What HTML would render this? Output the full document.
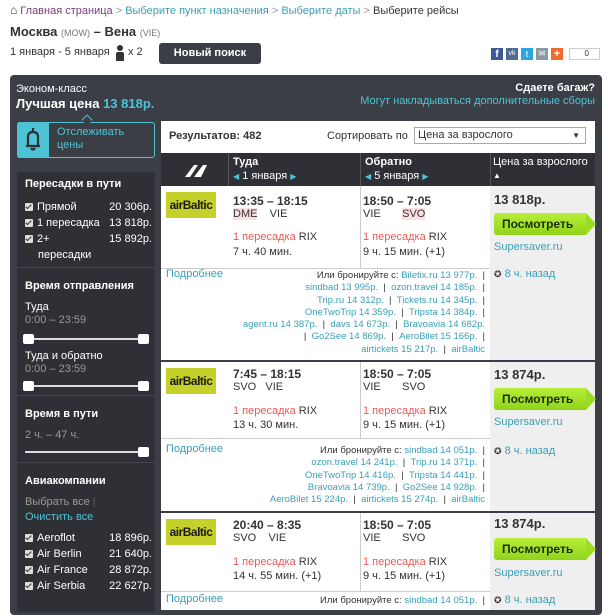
<!DOCTYPE html>
<html><head><meta charset="utf-8"><style>
*{margin:0;padding:0;box-sizing:border-box}
body{width:609px;height:600px;overflow:hidden;background:#fff;font-family:"Liberation Sans",Arial,sans-serif;font-size:11px;color:#333;position:relative}
.a{position:absolute;white-space:nowrap}
.lk{color:#3aa0b8}
.cy{color:#4fc3d6}
.panel{position:absolute;left:10px;top:75px;width:592px;height:540px;background:#3b3e45;border-radius:4px}
.side{position:absolute;left:17px;top:172px;width:138px;height:440px;background:#2e3036}
.sec{position:absolute;left:0;width:138px;border-top:1px solid #44474e}
.w{color:#fff}
.g{color:#999}
.h{font-weight:bold;color:#fff;font-size:11px}
.cb{display:inline-block;width:8px;height:8px;background:#ddd;border-radius:1px;margin-right:4px;vertical-align:-1px;position:relative}
.cb:after{content:"";position:absolute;left:2px;top:0px;width:2px;height:5px;border:solid #333;border-width:0 1.5px 1.5px 0;transform:rotate(45deg)}
.sl{position:absolute;left:8px;width:122px;height:2px;background:#ddd}
.kn{position:absolute;top:-4px;width:11px;height:10px;background:#fff;border-radius:2px}
.main{position:absolute;left:161px;top:121px;width:434px;height:490px;background:#fff}
.th{position:absolute;left:161px;top:153px;width:434px;height:33px;background:#2e3036}
.row{position:absolute;left:161px;width:434px;background:#fff;border-bottom:3px solid #3b3e45}
.pc{position:absolute;left:329px;top:0;width:105px;height:100%;background:#efefef}
.logo{position:absolute;left:5px;top:6px;width:50px;height:26px;background:#c5d12a;color:#1a1a1a;font-size:12px;font-weight:bold;text-align:center;line-height:26px;letter-spacing:-0.5px}
.t{font-size:12px;font-weight:bold;color:#333}
.red{color:#e85a5a}
.hl{background:#fbe0e0}
.btn{position:absolute;left:3px;width:92px;height:22px;background:linear-gradient(#b8ee3a,#8fd41a);border-radius:3px 0 0 3px;color:#1a3000;font-weight:bold;font-size:12px;line-height:22px;padding-left:8px}
.btn:after{content:"";position:absolute;right:-10px;top:0;border-left:10px solid #9ddc22;border-top:11px solid transparent;border-bottom:11px solid transparent}
.alt{position:absolute;right:110px;text-align:right;font-size:9.5px;line-height:12.3px;color:#333}
.alt span{color:#3aa0b8}
.vl{position:absolute;top:0;width:1px;background:#ccc}
</style></head><body>
<div class="a" style="left:10px;top:3px;font-size:11px"><span style="color:#333;font-size:12px">&#8962;</span><span style="color:#7a3a80"> Главная страница</span> <span class="g">&gt;</span> <span class="lk">Выберите пункт назначения</span> <span class="g">&gt;</span> <span class="lk">Выберите даты</span> <span class="g">&gt;</span> Выберите рейсы</div>
<div class="a" style="left:10px;top:24px;font-size:13px;font-weight:bold;color:#333">Москва <span style="font-weight:normal;font-size:9px;color:#777">(MOW)</span> – Вена <span style="font-weight:normal;font-size:9px;color:#777">(VIE)</span></div>
<div class="a" style="left:10px;top:46px;font-size:11px">1 января - 5 января</div>
<div class="a" style="left:116px;top:45px;width:8px;height:16px"><div style="width:6px;height:6px;background:#333;border-radius:50%;margin-left:1px"></div><div style="width:8px;height:9px;background:#333;margin-top:1px;border-radius:2px 2px 0 0"></div></div>
<div class="a" style="left:128px;top:46px">x 2</div>
<div class="a" style="left:159px;top:43px;width:102px;height:21px;background:#3b3e45;border-radius:3px;color:#fff;font-weight:bold;font-size:11px;text-align:center;line-height:21px">Новый поиск</div>
<div class="a" style="left:491px;top:48px;width:12px;height:12px;background:#3b5998;color:#fff;font-weight:bold;font-size:10px;text-align:center;line-height:13px">f</div>
<div class="a" style="left:506px;top:48px;width:12px;height:12px;background:#4c6c91;color:#fff;font-size:7px;text-align:center;line-height:12px">vk</div>
<div class="a" style="left:521px;top:48px;width:12px;height:12px;background:#2ea7e0;color:#fff;font-size:9px;text-align:center;line-height:12px">t</div>
<div class="a" style="left:536px;top:48px;width:12px;height:12px;background:#8a9aa0;color:#fff;font-size:8px;text-align:center;line-height:12px">✉</div>
<div class="a" style="left:551px;top:48px;width:12px;height:12px;background:#f26a2e;color:#fff;font-weight:bold;font-size:11px;text-align:center;line-height:12px">+</div>
<div class="a" style="left:569px;top:48px;width:31px;height:12px;border:1px solid #ccc;font-size:8px;text-align:right;padding-right:10px;line-height:10px">0</div>

<div class="panel"></div>
<div class="a w" style="left:16px;top:83px;font-size:11px">Эконом-класс</div>
<div class="a" style="left:16px;top:96px;font-size:13px;font-weight:bold;color:#fff">Лучшая цена <span class="cy">13 818р.</span></div>
<div class="a w" style="right:14px;top:82px;font-weight:bold;font-size:11px">Сдаете багаж?</div>
<div class="a cy" style="right:14px;top:95px;font-size:11px">Могут накладываться дополнительные сборы</div>

<div class="a" style="left:17px;top:122px;width:138px;height:36px;border:1.5px solid #4fc3d6;border-radius:3px;background:#3b3e45"></div>
<div class="a" style="left:17px;top:122px;width:32px;height:36px;background:#4fc3d6;border-radius:3px 0 0 3px"></div>
<svg class="a" style="left:24px;top:126px" width="18" height="26" viewBox="0 0 18 26"><path d="M9 2v3M4 20V11q0-5 5-5t5 5v9zM2 20h14M7 22q2 3 4 0" stroke="#2e3036" stroke-width="2.2" fill="none"/></svg>
<div class="a" style="left:83px;top:116px;width:8px;height:8px;border-left:1.5px solid #4fc3d6;border-top:1.5px solid #4fc3d6;background:#3b3e45;transform:rotate(45deg)"></div>
<div class="a cy" style="left:57px;top:126px;line-height:13px;white-space:normal;width:90px">Отслеживать<br>цены</div>

<div class="side">
 <div class="a h" style="left:8px;top:6px">Пересадки в пути</div>
 <div class="a w" style="left:8px;top:29px"><span class="cb"></span>Прямой</div><div class="a w" style="right:3px;top:29px">20 306р.</div>
 <div class="a w" style="left:8px;top:45px"><span class="cb"></span>1 пересадка</div><div class="a w" style="right:3px;top:45px">13 818р.</div>
 <div class="a w" style="left:8px;top:61px"><span class="cb"></span>2+</div><div class="a w" style="right:3px;top:61px">15 892р.</div>
 <div class="a w" style="left:21px;top:77px">пересадки</div>
 <div class="sec" style="top:95px;height:128px">
  <div class="a h" style="left:8px;top:12px">Время отправления</div>
  <div class="a w" style="left:8px;top:33px">Туда</div>
  <div class="a g" style="left:8px;top:46px">0:00 – 23:59</div>
  <div class="sl" style="top:70px"><div class="kn" style="left:-2px"></div><div class="kn" style="right:-2px"></div></div>
  <div class="a w" style="left:8px;top:82px">Туда и обратно</div>
  <div class="a g" style="left:8px;top:95px">0:00 – 23:59</div>
  <div class="sl" style="top:117px"><div class="kn" style="left:-2px"></div><div class="kn" style="right:-2px"></div></div>
 </div>
 <div class="sec" style="top:223px;height:67px">
  <div class="a h" style="left:8px;top:12px">Время в пути</div>
  <div class="a g" style="left:8px;top:33px">2 ч. – 47 ч.</div>
  <div class="sl" style="top:55px"><div class="kn" style="right:-2px"></div></div>
 </div>
 <div class="sec" style="top:290px;height:150px">
  <div class="a h" style="left:8px;top:12px">Авиакомпании</div>
  <div class="a g" style="left:8px;top:33px">Выбрать все <span style="color:#555">|</span></div>
  <div class="a cy" style="left:8px;top:48px">Очистить все</div>
  <div class="a w" style="left:8px;top:69px"><span class="cb"></span>Aeroflot</div><div class="a w" style="right:3px;top:69px">18 896р.</div>
  <div class="a w" style="left:8px;top:85px"><span class="cb"></span>Air Berlin</div><div class="a w" style="right:3px;top:85px">21 640р.</div>
  <div class="a w" style="left:8px;top:101px"><span class="cb"></span>Air France</div><div class="a w" style="right:3px;top:101px">28 872р.</div>
  <div class="a w" style="left:8px;top:117px"><span class="cb"></span>Air Serbia</div><div class="a w" style="right:3px;top:117px">22 627р.</div>
 </div>
</div>

<div class="main"></div>
<div class="a" style="left:169px;top:130px;font-weight:bold;color:#333">Результатов: 482</div>
<div class="a" style="left:327px;top:130px;color:#333">Сортировать по</div>
<div class="a" style="left:414px;top:127px;width:172px;height:17px;border:1px solid #aaa;padding-left:3px;line-height:15px">Цена за взрослого<span style="position:absolute;right:5px;font-size:8px">▼</span></div>

<div class="th">
 <svg class="a" style="left:24px;top:10px" width="22" height="14" viewBox="0 0 22 14"><path d="M0 14L9 2h4L5 14zM9 14L18 2h4L16 14z" fill="#fff"/></svg>
 <div class="a" style="left:67px;top:0;width:1px;height:33px;background:#555"></div>
 <div class="a w" style="left:72px;top:3px;font-weight:bold;font-size:11px">Туда</div>
 <div class="a w" style="left:72px;top:17px"><span class="cy" style="font-size:8px">◀</span> 1 января <span class="cy" style="font-size:8px">▶</span></div>
 <div class="a" style="left:199px;top:0;width:1px;height:33px;background:#555"></div>
 <div class="a w" style="left:204px;top:3px;font-weight:bold;font-size:11px">Обратно</div>
 <div class="a w" style="left:204px;top:17px"><span class="cy" style="font-size:8px">◀</span> 5 января <span class="cy" style="font-size:8px">▶</span></div>
 <div class="a" style="left:329px;top:0;width:1px;height:33px;background:#555"></div>
 <div class="a w" style="left:332px;top:3px">Цена за взрослого</div>
 <div class="a w" style="left:332px;top:18px;font-size:8px">▲</div>
</div>

<!-- row 1 -->
<div class="row" style="top:186px;height:177px">
 <div class="pc"></div>
 <div class="logo">airBaltic</div>
 <div class="vl" style="left:199px;height:82px"></div>
 <div class="a" style="left:0;top:82px;width:329px;height:1px;background:#ccc"></div>
 <div class="a t" style="left:72px;top:8px">13:35 – 18:15</div>
 <div class="a" style="left:72px;top:22px;font-size:11px"><span class="hl">DME</span>&nbsp;&nbsp;&nbsp;&nbsp;VIE</div>
 <div class="a" style="left:72px;top:45px"><span class="red">1 пересадка</span> RIX</div>
 <div class="a" style="left:72px;top:60px">7 ч. 40 мин.</div>
 <div class="a t" style="left:202px;top:8px">18:50 – 7:05</div>
 <div class="a" style="left:202px;top:22px">VIE&nbsp;&nbsp;&nbsp;&nbsp;&nbsp;&nbsp;&nbsp;<span class="hl">SVO</span></div>
 <div class="a" style="left:202px;top:45px"><span class="red">1 пересадка</span> RIX</div>
 <div class="a" style="left:202px;top:60px">9 ч. 15 мин. (+1)</div>
 <div class="a" style="left:333px;top:6px;font-size:13px;font-weight:bold">13 818р.</div>
 <div class="btn" style="left:333px;top:27px">Посмотреть</div>
 <div class="a lk" style="left:333px;top:55px">Supersaver.ru</div>
 <div class="a" style="left:333px;top:82px"><span style="font-size:9px">✪</span> <span class="lk">8 ч. назад</span></div>
 <div class="a lk" style="left:5px;top:82px">Подробнее</div>
 <div class="alt" style="top:84px">Или бронируйте с: <span>Biletix.ru 13 977р.</span> &nbsp;|<br><span>sindbad 13 995р.</span> &nbsp;| &nbsp;<span>ozon.travel 14 185р.</span> &nbsp;|<br><span>Trip.ru 14 312р.</span> &nbsp;| &nbsp;<span>Tickets.ru 14 345р.</span> &nbsp;|<br><span>OneTwoTrip 14 359р.</span> &nbsp;| &nbsp;<span>Tripsta 14 384р.</span> &nbsp;|<br><span>agent.ru 14 387р.</span> &nbsp;| &nbsp;<span>davs 14 673р.</span> &nbsp;| &nbsp;<span>Bravoavia 14 682р.</span><br>| &nbsp;<span>Go2See 14 869р.</span> &nbsp;| &nbsp;<span>AeroBilet 15 166р.</span> &nbsp;|<br><span>airtickets 15 217р.</span> &nbsp;| &nbsp;<span>airBaltic</span></div>
</div>

<!-- row 2 -->
<div class="row" style="top:362px;height:152px">
 <div class="pc"></div>
 <div class="logo">airBaltic</div>
 <div class="vl" style="left:199px;height:76px"></div>
 <div class="a" style="left:0;top:76px;width:329px;height:1px;background:#ccc"></div>
 <div class="a t" style="left:72px;top:5px">7:45 – 18:15</div>
 <div class="a" style="left:72px;top:19px">SVO&nbsp;&nbsp;&nbsp;VIE</div>
 <div class="a" style="left:72px;top:43px"><span class="red">1 пересадка</span> RIX</div>
 <div class="a" style="left:72px;top:57px">13 ч. 30 мин.</div>
 <div class="a t" style="left:202px;top:5px">18:50 – 7:05</div>
 <div class="a" style="left:202px;top:19px">VIE&nbsp;&nbsp;&nbsp;&nbsp;&nbsp;&nbsp;&nbsp;SVO</div>
 <div class="a" style="left:202px;top:43px"><span class="red">1 пересадка</span> RIX</div>
 <div class="a" style="left:202px;top:57px">9 ч. 15 мин. (+1)</div>
 <div class="a" style="left:333px;top:5px;font-size:13px;font-weight:bold">13 874р.</div>
 <div class="btn" style="left:333px;top:26px">Посмотреть</div>
 <div class="a lk" style="left:333px;top:54px">Supersaver.ru</div>
 <div class="a" style="left:333px;top:83px"><span style="font-size:9px">✪</span> <span class="lk">8 ч. назад</span></div>
 <div class="a lk" style="left:5px;top:81px">Подробнее</div>
 <div class="alt" style="top:83px">Или бронируйте с: <span>sindbad 14 051р.</span> &nbsp;|<br><span>ozon.travel 14 241р.</span> &nbsp;| &nbsp;<span>Trip.ru 14 371р.</span> &nbsp;|<br><span>OneTwoTrip 14 416р.</span> &nbsp;| &nbsp;<span>Tripsta 14 441р.</span> &nbsp;|<br><span>Bravoavia 14 739р.</span> &nbsp;| &nbsp;<span>Go2See 14 928р.</span> &nbsp;|<br><span>AeroBilet 15 224р.</span> &nbsp;| &nbsp;<span>airtickets 15 274р.</span> &nbsp;| &nbsp;<span>airBaltic</span></div>
</div>

<!-- row 3 -->
<div class="row" style="top:513px;height:100px">
 <div class="pc"></div>
 <div class="logo">airBaltic</div>
 <div class="vl" style="left:199px;height:78px"></div>
 <div class="a" style="left:0;top:78px;width:329px;height:1px;background:#ccc"></div>
 <div class="a t" style="left:72px;top:5px">20:40 – 8:35</div>
 <div class="a" style="left:72px;top:19px">SVO&nbsp;&nbsp;&nbsp;&nbsp;VIE</div>
 <div class="a" style="left:72px;top:43px"><span class="red">1 пересадка</span> RIX</div>
 <div class="a" style="left:72px;top:57px">14 ч. 55 мин. (+1)</div>
 <div class="a t" style="left:202px;top:5px">18:50 – 7:05</div>
 <div class="a" style="left:202px;top:19px">VIE&nbsp;&nbsp;&nbsp;&nbsp;&nbsp;&nbsp;&nbsp;SVO</div>
 <div class="a" style="left:202px;top:43px"><span class="red">1 пересадка</span> RIX</div>
 <div class="a" style="left:202px;top:57px">9 ч. 15 мин. (+1)</div>
 <div class="a" style="left:333px;top:3px;font-size:13px;font-weight:bold">13 874р.</div>
 <div class="btn" style="left:333px;top:25px">Посмотреть</div>
 <div class="a lk" style="left:333px;top:54px">Supersaver.ru</div>
 <div class="a" style="left:333px;top:81px"><span style="font-size:9px">✪</span> <span class="lk">8 ч. назад</span></div>
 <div class="a lk" style="left:5px;top:80px">Подробнее</div>
 <div class="alt" style="top:82px">Или бронируйте с: <span>sindbad 14 051р.</span> &nbsp;|</div>
</div>
</body></html>
